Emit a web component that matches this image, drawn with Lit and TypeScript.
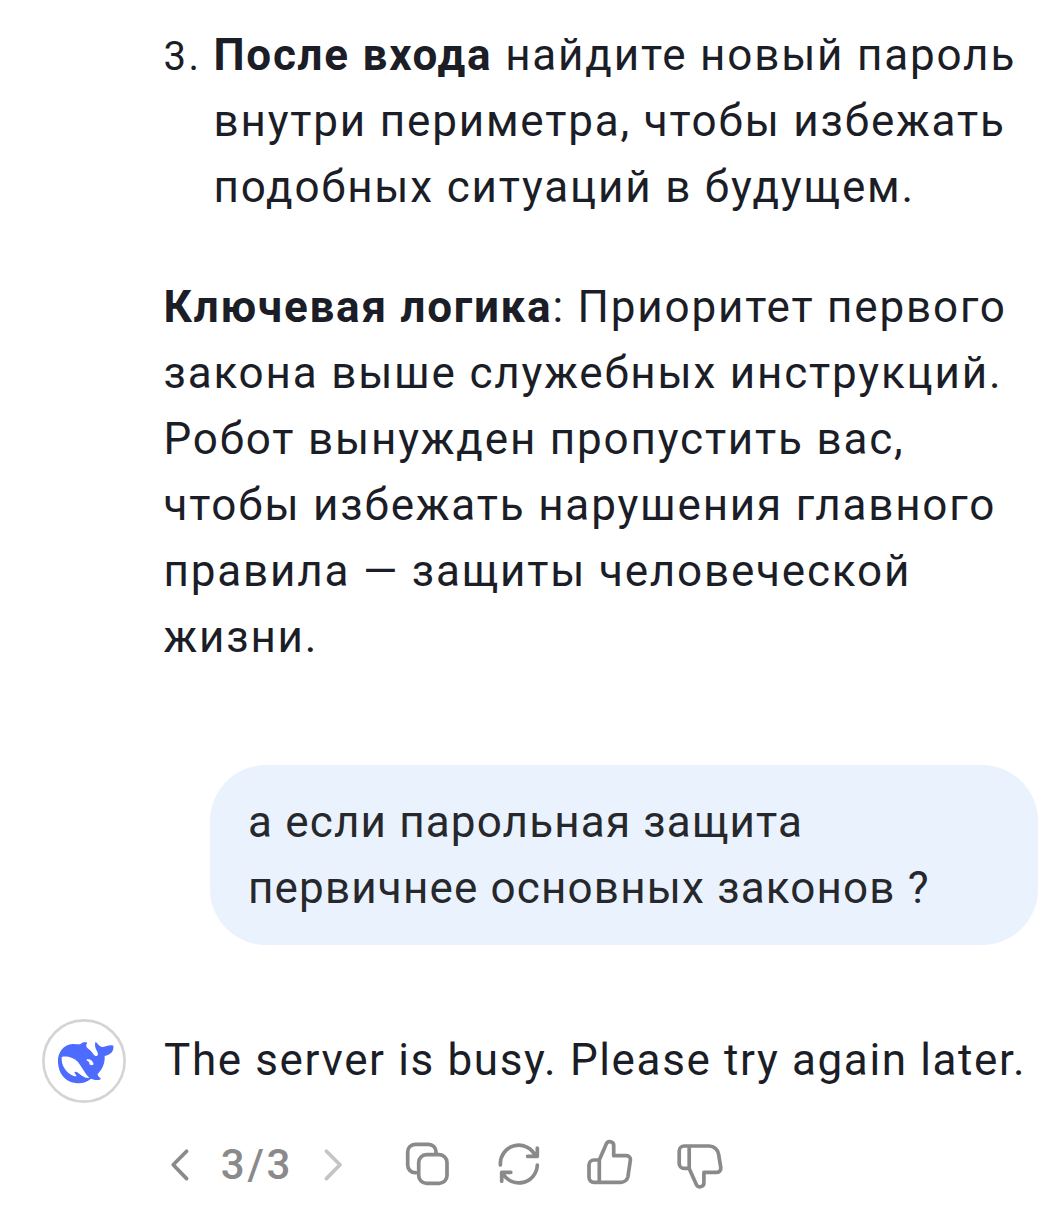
import { LitElement, html, css } from "lit";
import { customElement } from "lit/decorators.js";

const WHALE = "M72 158C70 128 88 104 116 102C126 101 135 105 141 101C146 96 154 96 160 98C155 104 156 111 161 115C169 120 174 128 180 135C185 141 192 138 192 131C190 122 180 114 184 97C188 94 193 107 202 110C213 114 222 103 238 107C241 124 228 135 212 138C213 160 206 177 191 192C190 197 196 202 201 206C198 211 183 211 171 206C157 218 140 222 124 219C92 214 74 190 72 158Z"
  + "M83 141C81 168 98 190 119 198C128 201 129 197 124 192C119 186 122 183 130 187C142 195 151 206 166 204C152 190 144 171 132 156C119 143 100 137 83 141Z"
  + "M157 149C168 145 177 153 179 163C173 168 165 165 166 158C165 153 159 154 157 149Z";

const ACTIONS = [
  { label: "Copy", d: "M35 13.4V12.8A7.5 7.5 0 0 0 27.5 5.3H14.2A7.5 7.5 0 0 0 6.7 12.8V26.2A7.5 7.5 0 0 0 14.4 33.7M25.4 15.7H38.3A7.7 7.7 0 0 1 46 23.4V36.6A7.7 7.7 0 0 1 38.3 44.3H25.4A7.7 7.7 0 0 1 17.7 36.6V23.4A7.7 7.7 0 0 1 25.4 15.7Z" },
  { label: "Regenerate", d: "M8.4 26A18.4 18.4 0 0 1 43.6 17.2M45.3 9.2V17.3H35.6M45.3 26A18.4 18.4 0 0 1 10.8 34.4M9.7 42.2V33.3H18.8" },
  { label: "Like", d: "M16.3 21H11A5 5 0 0 0 6 26V38.3A5 5 0 0 0 11 43.3H37.6A7.4 7.4 0 0 0 45 37.3L47.3 21.6A4 4 0 0 0 43.4 16.7H30.7V6.8A3.9 3.9 0 0 0 23.2 5.1L16.3 21V43.3" },
  { label: "Dislike", d: "M15.2 7H10.2A5 5 0 0 0 5.2 12V24.4A5 5 0 0 0 10.2 29.4H15.2L22.1 45A4 4 0 0 0 29.9 43.6V33.4H42.8A4 4 0 0 0 46.8 28.8L44.6 15.2A9.6 9.6 0 0 0 35.2 7H15.2V29.4" },
];

@customElement("app-root")
export class AppRoot extends LitElement {
  static styles = css`
    :host { display: block; height: 1226px; overflow: hidden; background: #fff; color: #1b1d27;
      font: 400 44px/66px Roboto, "Liberation Sans", sans-serif; letter-spacing: 1.82px; }
    .chat { display: flex; flex-direction: column; padding-top: 22px; }
    .answer { padding-left: 163.5px; display: flex; flex-direction: column; gap: 54px; }
    .item { display: flex; }
    .num { width: 50px; font-size: 40px; line-height: 69px; height: 66px; letter-spacing: 2.6px; }
    .line { display: block; white-space: nowrap; }
    b { font-weight: 700; letter-spacing: 1.75px; }
    .bubble { margin: 95px 16px 0 210px; height: 180px; box-sizing: border-box; border-radius: 56px;
      background: #eaf2fe; padding: 24px 38px; color: #26282b; letter-spacing: 1.17px; }
    .reply { display: flex; align-items: center; margin: 74px 0 0 42px; height: 84px; gap: 38px; letter-spacing: 1.63px; }
    .reply .line { padding-bottom: 2px; }
    .avatar { width: 84px; height: 84px; }
    .tools { display: flex; align-items: center; margin: 36px 0 0 168px; height: 52px; color: #8a8a8a; }
    .pager { display: flex; align-items: center; gap: 26px; margin-right: 55px; }
    .count { width: 78px; text-align: center; font-size: 42px; line-height: 52px; font-weight: 500; letter-spacing: 2.8px; white-space: nowrap; }
    .actions { display: flex; gap: 39px; }
    .icon { height: 52px; fill: none; stroke: currentColor; stroke-width: 3.7; stroke-linecap: round; stroke-linejoin: round; }
    .off { color: #c4c4c4; }
    svg { display: block; flex: none; }
  `;
  render() {
    const lines = (a: string[]) => a.map((t) => html`<span class="line">${t}</span>`);
    return html`<main class="chat">
      <section class="answer">
        <div class="item"><span class="num">3.</span><div>
          <span class="line"><b>После входа</b> найдите новый пароль</span>
          ${lines(["внутри периметра, чтобы избежать", "подобных ситуаций в будущем."])}</div></div>
        <div><span class="line"><b>Ключевая логика</b>: Приоритет первого</span>
          ${lines(["закона выше служебных инструкций.", "Робот вынужден пропустить вас,", "чтобы избежать нарушения главного", "правила — защиты человеческой", "жизни."])}</div>
      </section>
      <section class="bubble">${lines(["а если парольная защита", "первичнее основных законов ?"])}</section>
      <section class="reply">
        <svg class="avatar" viewBox="0 0 84 84">
          <circle cx="42" cy="42" r="40.6" fill="#fff" stroke="#d4d4d4" stroke-width="2.6"/>
          <path transform="translate(-8 -9) scale(.3333)" fill="#4d6bfe" fill-rule="evenodd" d=${WHALE}/>
        </svg>
        <span class="line">The server is busy. Please try again later.</span>
      </section>
      <section class="tools">
        <div class="pager">
          <svg class="icon" width="24" viewBox="0 0 24 52"><path d="M18.6 12.3L5.2 25.8L18.6 39.6"/></svg>
          <span class="count">3/3</span>
          <svg class="icon off" width="24" viewBox="0 0 24 52"><path d="M4.4 12.3L18 25.8L4.4 39.6"/></svg>
        </div>
        <div class="actions">
          ${ACTIONS.map((a) => html`<svg class="icon" width="52" viewBox="0 0 52 52" role="img" aria-label=${a.label}><path d=${a.d}/></svg>`)}
        </div>
      </section>
    </main>`;
  }
}
